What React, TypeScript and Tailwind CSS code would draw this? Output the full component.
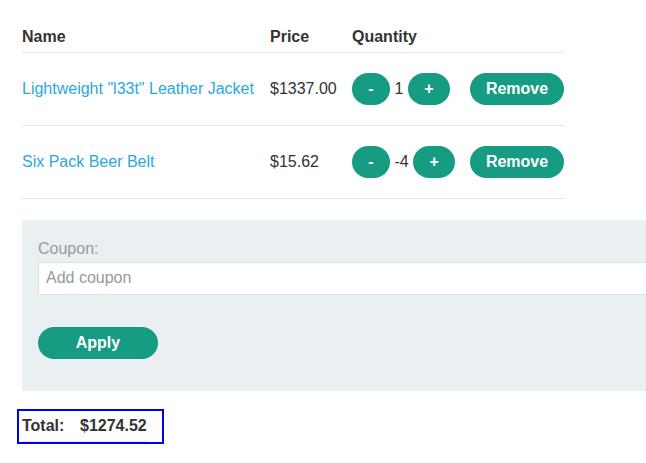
import React, { useState } from 'react';

type Item = { id: number; name: string; price: number; qty: number };

const initialItems: Item[] = [
  { id: 1, name: 'Lightweight "l33t" Leather Jacket', price: 1337, qty: 1 },
  { id: 2, name: 'Six Pack Beer Belt', price: 15.62, qty: -4 },
];

function PillButton({ children, onClick, className = '' }: { children: React.ReactNode; onClick?: () => void; className?: string }) {
  return (
    <button
      onClick={onClick}
      className={`inline-block h-8 rounded-full bg-[#169c82] font-bold text-white align-middle leading-8 ${className}`}
    >
      {children}
    </button>
  );
}

export default function App() {
  const [items, setItems] = useState<Item[]>(initialItems);
  const [coupon, setCoupon] = useState('');

  const changeQty = (id: number, delta: number) =>
    setItems(items.map(i => (i.id === id ? { ...i, qty: i.qty + delta } : i)));
  const remove = (id: number) => setItems(items.filter(i => i.id !== id));

  const total = items.reduce((s, i) => s + i.price * i.qty, 0);

  return (
    <div className="w-[646px] h-[463px] overflow-hidden bg-white text-[16px] text-[#333] font-['Liberation_Sans',Arial,sans-serif]">
      <div className="pl-[22px] pt-[22px]">
        <table className="border-collapse w-[542px]">
          <thead>
            <tr className="border-b border-[#e5e5e5] text-left">
              <th className="w-[248px] h-[30px] p-0 font-bold align-middle">Name</th>
              <th className="w-[82px] p-0 font-bold align-middle">Price</th>
              <th className="w-[118px] p-0 font-bold align-middle">Quantity</th>
              <th className="p-0"></th>
            </tr>
          </thead>
          <tbody>
            {items.map(item => (
              <tr key={item.id} className="border-b border-[#e5e5e5]">
                <td className="h-[73px] p-0 pt-px align-middle">
                  <a href="#" className="text-[#2aa8e0]">{item.name}</a>
                </td>
                <td className="p-0 pt-px align-middle">${item.price.toFixed(2)}</td>
                <td className="p-0 pt-px align-middle whitespace-nowrap">
                  <PillButton className="w-[38px]" onClick={() => changeQty(item.id, -1)}>-</PillButton>{' '}
                  <span className="align-middle">{item.qty}</span>{' '}
                  <PillButton className="w-[42px]" onClick={() => changeQty(item.id, 1)}>+</PillButton>
                </td>
                <td className="p-0 pt-px align-middle">
                  <PillButton className="w-[94px]" onClick={() => remove(item.id)}>Remove</PillButton>
                </td>
              </tr>
            ))}
          </tbody>
        </table>

        <div className="mt-[21px] w-[700px] bg-[#eaeff2] pl-4 pt-[19px] pb-8">
          <label className="block leading-[19px] text-[#999]">Coupon:</label>
          <input
            value={coupon}
            onChange={e => setCoupon(e.target.value)}
            placeholder="Add coupon"
            className="mt-1 block h-[33px] w-full border border-[#e0e0e0] bg-white px-[7px] text-[16px] text-[#333] outline-none placeholder:text-[#999]"
          />
          <PillButton className="mt-8 block w-[120px]">Apply</PillButton>
        </div>

        <div className="mt-[18px] -ml-[5px] w-[147px] border-2 border-[#0000ee] pl-[3px]">
          <table className="border-collapse">
            <tbody>
              <tr className="border-b border-[#e5e5e5] font-bold">
                <td className="h-[31px] w-[58px] p-0 align-middle">Total:</td>
                <td className="p-0 align-middle">${total.toFixed(2)}</td>
              </tr>
            </tbody>
          </table>
        </div>
      </div>
    </div>
  );
}
